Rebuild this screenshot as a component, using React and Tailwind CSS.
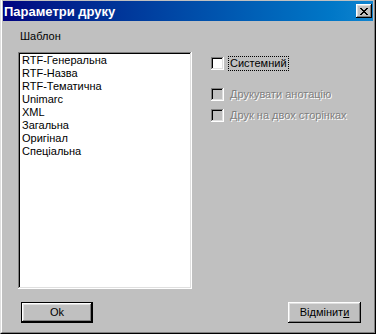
import React from "react";

const items = [
  "RTF-Генеральна",
  "RTF-Назва",
  "RTF-Тематична",
  "Unimarc",
  "XML",
  "Загальна",
  "Оригінал",
  "Спеціальна",
];

const raised =
  "shadow-[inset_-1px_-1px_#000,inset_1px_1px_#fff,inset_-2px_-2px_#808080,inset_2px_2px_#dfdfdf]";
const sunken =
  "shadow-[inset_-1px_-1px_#fff,inset_1px_1px_#808080,inset_-2px_-2px_#dfdfdf,inset_2px_2px_#000]";

function CheckBox({ label, disabled, focused }) {
  return (
    <div className="flex items-center h-[13px]">
      <span
        className={`w-[13px] h-[13px] shrink-0 ${sunken} ${
          disabled ? "bg-[#c0c0c0]" : "bg-white"
        }`}
      />
      <span
        className={`ml-[4px] px-[1px] leading-[13px] border border-dotted ${
          focused ? "border-black text-black" : "border-transparent"
        } ${
          disabled
            ? "text-[#808080] [text-shadow:1px_1px_0_#fff]"
            : ""
        }`}
      >
        {label}
      </span>
    </div>
  );
}

export default function App() {
  return (
    <div className="w-[376px] h-[334px] bg-[#c0c0c0] font-['Liberation_Sans',Arial,sans-serif] text-[11px] text-black border-l border-l-[#dfdfdf] border-r border-r-black border-b border-b-black">
      <div className="h-full flex flex-col border-l border-l-white border-r border-r-[#808080] border-b border-b-[#808080] px-[1px] pt-[1px]">
        {/* title bar */}
        <div className="h-[20px] flex items-center justify-between bg-gradient-to-r from-[#000080] to-[#1084d0] pl-[1px] pr-[1px]">
          <span className="text-white font-bold text-[13px] leading-none">
            Параметри друку
          </span>
          <button
            className={`w-[16px] h-[14px] bg-[#c0c0c0] flex items-center justify-center ${raised}`}
          >
            <svg width="8" height="7" viewBox="0 0 8 7">
              <path
                d="M0 0h2v1h1v1h2v-1h1v-1h2v1h-1v1h-1v1h-1v1h1v1h1v1h1v1h-2v-1h-1v-1h-2v1h-1v1h-2v-1h1v-1h1v-1h1v-1h-1v-1h-1v-1h-1z"
                fill="#000"
              />
            </svg>
          </button>
        </div>

        {/* body */}
        <div className="flex flex-1">
          <div className="ml-[15px] mt-[9px] flex flex-col">
            <span className="ml-[2px] leading-[13px]">Шаблон</span>
            <div
              className={`mt-[9px] w-[174px] h-[237px] bg-white p-[2px] ${sunken}`}
            >
              {items.map((it) => (
                <div key={it} className="leading-[13px] pl-[2px]">
                  {it}
                </div>
              ))}
            </div>
          </div>
          <div className="ml-[19px] mt-[36px] flex flex-col">
            <CheckBox label="Системний" focused />
            <div className="mt-[18px]">
              <CheckBox label="Друкувати анотацію" disabled />
            </div>
            <div className="mt-[8px]">
              <CheckBox label="Друк на двох сторінках" disabled />
            </div>
          </div>
        </div>

        {/* buttons */}
        <div className="flex justify-between pl-[18px] pr-[12px] mb-[9px]">
          <button className="w-[72px] h-[21px] border border-black bg-[#c0c0c0] p-0">
            <div
              className={`w-full h-full flex items-center justify-center ${raised}`}
            >
              Ok
            </div>
          </button>
          <button
            className={`w-[73px] h-[21px] bg-[#c0c0c0] flex items-center justify-center ${raised}`}
          >
            Відмінит<span className="underline">и</span>
          </button>
        </div>
      </div>
    </div>
  );
}
